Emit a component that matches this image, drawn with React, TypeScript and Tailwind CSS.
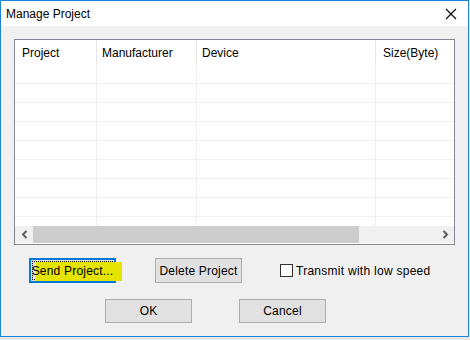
const font = { fontFamily: '"Liberation Sans", Arial, sans-serif' };

const cols = [
  { label: "Project", w: "w-[82px]", pad: "pl-[7px]" },
  { label: "Manufacturer", w: "w-[100px]", pad: "pl-[5px]" },
  { label: "Device", w: "w-[179px]", pad: "pl-[5px]" },
  { label: "Size(Byte)", w: "flex-1", pad: "pl-[7px]" },
];

function Chevron({ dir }: { dir: "left" | "right" }) {
  return (
    <svg width="7" height="9" viewBox="0 0 7 9">
      <path
        d={dir === "left" ? "M5.5 1 L2 4.5 L5.5 8" : "M1.5 1 L5 4.5 L1.5 8"}
        fill="none"
        stroke="#606060"
        strokeWidth="2"
      />
    </svg>
  );
}

function Button({ label, className = "" }: { label: string; className?: string }) {
  return (
    <div
      className={`flex h-[24px] w-[87px] items-center justify-center border border-[#adadad] bg-[#e1e1e1] text-[12px] tracking-[0.2px] text-black ${className}`}
    >
      {label}
    </div>
  );
}

export default function App() {
  const rows = Array.from({ length: 9 });
  return (
    <div className="h-[340px] w-[470px] bg-[#e6e6e6]" style={font}>
      <div className="flex h-[337px] w-[469px] flex-col border border-[#1883d7] bg-[#f0f0f0]">
        {/* title bar */}
        <div className="flex h-[25px] items-center justify-between bg-white pl-[5px] pr-[11px]">
          <span className="text-[12px] text-black">Manage Project</span>
          <svg width="12" height="12" viewBox="0 0 12 12">
            <path d="M1 1 L11 11 M11 1 L1 11" stroke="#000" strokeWidth="1.1" />
          </svg>
        </div>

        {/* list view */}
        <div className="ml-[13px] mt-[13px] flex h-[206px] w-[441px] flex-col border border-[#828790] bg-white">
          <div className="flex h-[25px] shrink-0">
            {cols.map((c, i) => (
              <div
                key={c.label}
                className={`flex items-center text-[12px] text-black ${c.w} ${c.pad} ${
                  i < 3 ? "border-r border-[#e5e5e5]" : ""
                }`}
              >
                {c.label}
              </div>
            ))}
          </div>
          <div className="flex-1 overflow-hidden">
            {rows.map((_, r) => (
              <div key={r} className="flex h-[19px] border-b border-[#f0f0f0]">
                {cols.map((c, i) => (
                  <div
                    key={c.label}
                    className={`${c.w} ${i < 3 ? "border-r border-[#f0f0f0]" : ""}`}
                  />
                ))}
              </div>
            ))}
          </div>
          {/* horizontal scrollbar */}
          <div className="mb-[1px] flex h-[17px] shrink-0 bg-[#f0f0f0]">
            <div className="flex w-[18px] items-center justify-center">
              <Chevron dir="left" />
            </div>
            <div className="w-[326px] bg-[#cdcdcd]" />
            <div className="flex-1" />
            <div className="flex w-[18px] items-center justify-center">
              <Chevron dir="right" />
            </div>
          </div>
        </div>

        {/* action row */}
        <div className="mt-[13px] flex items-center">
          <div className="relative ml-[28px] flex h-[25px] w-[87px] items-center justify-center border-2 border-[#0078d7] bg-[#e1e1e1]">
            <div className="absolute inset-[1px] border border-dotted border-black" />
            <div className="absolute left-[5px] top-[2px] h-[19px] w-[86px] bg-[#e4e400]" />
            <span className="relative text-[12px] tracking-[0.2px] text-black">Send Project...</span>
          </div>
          <Button label="Delete Project" className="ml-[39px] h-[25px] w-[86px]" />
          <div className="ml-[38px] flex items-center">
            <div className="h-[13px] w-[13px] border border-[#333] bg-white" />
            <span className="ml-[3px] text-[12px] tracking-[0.27px] text-black">
              Transmit with low speed
            </span>
          </div>
        </div>

        <div className="mt-[16px] flex">
          <Button label="OK" className="ml-[104px]" />
          <Button label="Cancel" className="ml-[47px]" />
        </div>
      </div>
    </div>
  );
}
